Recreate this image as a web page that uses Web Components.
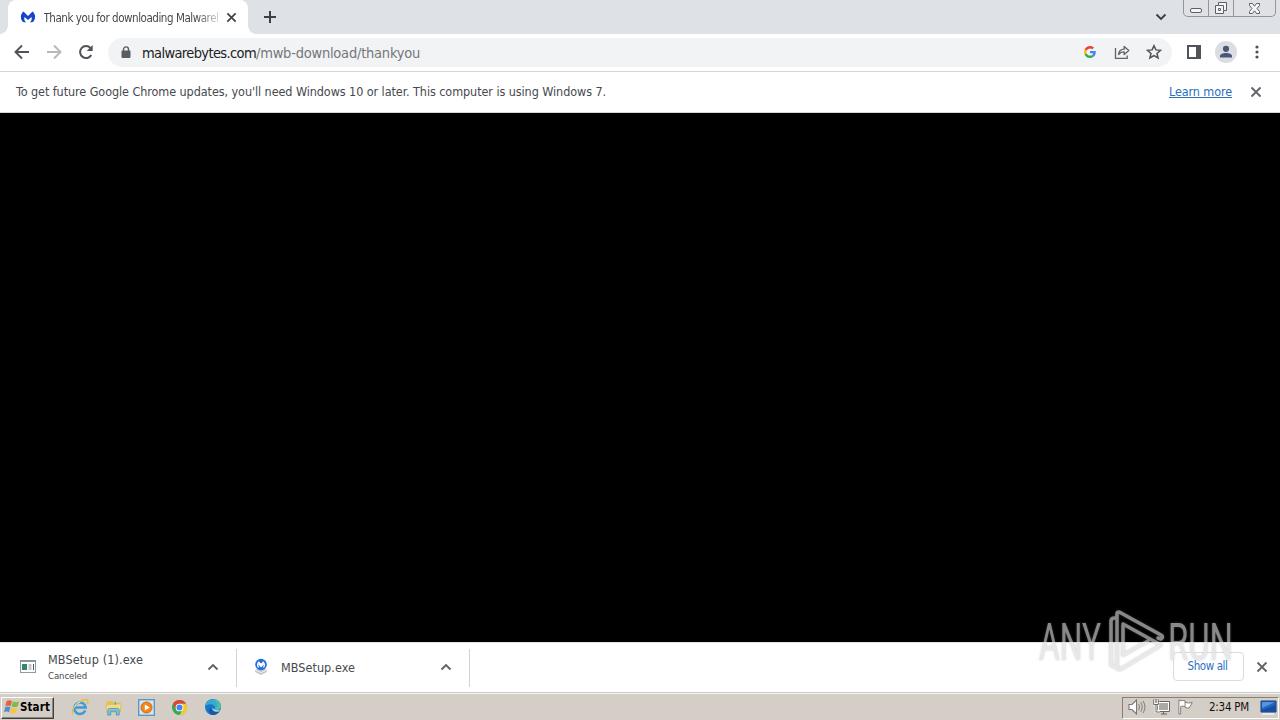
<!DOCTYPE html>
<html lang="en"><head><meta charset="utf-8"><title>Chrome desktop</title>
<style>html,body{margin:0;height:100%;overflow:hidden;font-family:"DejaVu Sans Condensed","DejaVu Sans",sans-serif;font-stretch:condensed}</style></head>
<body><desktop-screen></desktop-screen>
<script>
const define=(name,css,html,after)=>{
  const t=document.createElement('template');
  t.innerHTML=`<style>*{box-sizing:border-box}svg{display:block;flex:none}${css}</style>${html}`;
  customElements.define(name,class extends HTMLElement{
    constructor(){super();this.attachShadow({mode:'open'}).append(t.content.cloneNode(true))}
    connectedCallback(){if(after)after(this)}
  });
};

/* A single line of text whose tracking is adjusted to a given width. */
define('fit-text',':host{display:block;white-space:pre;flex:none}span{display:inline-block}','<span><slot></slot></span>',el=>{
  const s=el.shadowRoot.querySelector('span'),w=+el.getAttribute('w');
  if(w){s.style.letterSpacing=(w-s.getBoundingClientRect().width)/el.textContent.length+'px';el.style.width=w+'px'}
});

const icons={
  m:['0 0 16 16','<path fill="#1745c9" d="M3.500 2.500C.2 5 0 10 3 13L6 13.500C4.200 11.500 4 9.500 4.500 8L8 11L11.500 8C12 9.500 11.800 11.500 10 13.500L13 13C16 10 15.800 5 12.500 2.500L8 7Z"/>'],
  close:['0 0 12 12','<path d="M1.500 1.500l9 9M10.500 1.500l-9 9" stroke="currentColor" stroke-width="1.800"/>'],
  plus:['0 0 14 14','<path d="M7 1v12M1 7h12" stroke="#3c4043" stroke-width="2"/>'],
  back:['0 0 16 16','<path d="M15 8H2M8 1.500L1.500 8L8 14.500" fill="none" stroke="currentColor" stroke-width="1.900"/>'],
  reload:['0 0 16 16','<path d="M13.300 11A6 6 0 1 1 12.500 4" fill="none" stroke="#505357" stroke-width="2"/><path d="M14.700 1v6H8.700Z" fill="#505357"/>'],
  lock:['0 0 10 13','<path d="M2.500 6V3.500a2.500 2.500 0 0 1 5 0V6" fill="none" stroke="#5a5d61" stroke-width="1.400"/><rect x=".5" y="5" width="9" height="8" rx="1" fill="#5a5d61"/>'],
  g:['0 0 48 48','<path fill="#EA4335" d="M24 9.500c3.540 0 6.710 1.220 9.210 3.600l6.850-6.850C35.900 2.380 30.470 0 24 0 14.620 0 6.510 5.380 2.560 13.220l7.980 6.190C12.430 13.720 17.740 9.500 24 9.500z"/><path fill="#4285F4" d="M46.980 24.550c0-1.570-.15-3.090-.38-4.550H24v9.020h12.940c-.58 2.960-2.260 5.480-4.780 7.180l7.730 6c4.510-4.180 7.090-10.360 7.090-17.650z"/><path fill="#FBBC05" d="M10.530 28.590A14.500 14.500 0 0 1 9.770 24c0-1.600.27-3.140.76-4.590l-7.980-6.190A24 24 0 0 0 0 24c0 3.880.92 7.540 2.560 10.780z"/><path fill="#34A853" d="M24 48c6.480 0 11.930-2.130 15.890-5.810l-7.730-6c-2.150 1.450-4.920 2.300-8.160 2.300-6.260 0-11.570-4.220-13.470-9.910l-7.980 6.190C6.510 42.620 14.620 48 24 48z"/>'],
  share:['0 0 16 16','<g fill="none" stroke="#5f6368" stroke-width="1.300"><path d="M1.500 4v10.300h11.700V11.500"/><path d="M4.500 10.500C5 7 7 5.300 10.200 5.200V2.500L14.800 6.500L10.200 10.500V7.800C7.800 7.800 6 8.500 4.500 10.500Z" stroke-linejoin="round"/></g>'],
  star:['0 0 16 16','<path d="M8 1.700l1.900 4.200 4.700.4-3.600 3.100 1.100 4.600L8 11.600 3.900 14 5 9.400 1.400 6.300l4.700-.4Z" fill="none" stroke="#505357" stroke-width="1.500"/>'],
  panel:['0 0 14 14','<path d="M0 0H14V14H0ZM2 2V12H9V2Z" fill="#505357" fill-rule="evenodd"/>'],
  user:['0 0 22 22','<circle cx="11" cy="11" r="11" fill="#dadde2"/><circle cx="11" cy="7.800" r="3.100" fill="#4a5878"/><path d="M5 16.500v-1.500c0-2 3-3 6-3s6 1 6 3v1.500Z" fill="#4a5878"/>'],
  dots:['0 0 4 14','<g fill="#505357"><circle cx="2" cy="2" r="1.600"/><circle cx="2" cy="7" r="1.600"/><circle cx="2" cy="12" r="1.600"/></g>'],
  down:['0 0 12 8','<path d="M1.500 1.500L6 6l4.500-4.500" fill="none" stroke="#3c4043" stroke-width="1.900"/>'],
  up:['0 0 12 8','<path d="M1.500 6.500L6 2l4.500 4.500" fill="none" stroke="#5f6368" stroke-width="1.900"/>'],
  exe:['0 0 16 13','<rect x=".5" y=".5" width="15" height="12" fill="#fff" stroke="#929a9e"/><path d="M0 1h16" stroke="#8b969b" stroke-width="2"/><path d="M2 4h5v6H2Z" fill="#368574"/><path d="M8.500 5h3M8.500 7h3M8.500 9h3" stroke="#8b9297"/><path d="M13.500 4v6" stroke="#455d70"/>'],
  setup:['0 0 16 17','<path d="M2 12l4-2h5l3 2v2l-6 3-6-3Z" fill="#c5c7cb"/><path d="M2 12l6 2.500L14 12" stroke="#eee" fill="none"/><circle cx="8" cy="6.500" r="5.800" fill="#2370dc"/><path d="M5.500 9.500Q3.700 6.700 5.700 4.200L8 6.500l2.300-2.300q2 2.500.2 5.300M5.700 6L8 8.500 10.300 6" fill="none" stroke="#fff" stroke-width="1.300"/>'],
  win:['0 0 18 16','<path d="M3 2Q6 .5 9 2L7.500 7.500Q5 6.400 1.500 7.600Z" fill="#e26336"/><path d="M10 2.500Q13 4 17 2.300L15.300 8Q12 9.300 8.500 8Z" fill="#83b948"/><path d="M1.300 8.700Q4.500 7.500 7.300 8.600L5.700 14Q3 12.800 0 14Z" fill="#4e91d3"/><path d="M8.200 9.200Q11 10.500 15 9.300L13.300 14.600Q10 16 6.700 14.600Z" fill="#f4c447"/>'],
  ie:['0 0 18 18','<path d="M14.300 12.500A5.700 5.700 0 1 1 14.700 9.500H4.500" fill="none" stroke="#3c9bdc" stroke-width="2.500"/><path d="M2 16C-1 13 6 3 15 1.500q3-.2 1.500 4.300" fill="none" stroke="#e4bd42" stroke-width="1.300"/><path d="M4 9Q5 4.500 9 4.200" fill="none" stroke="#b3e7fb"/>'],
  folder:['0 0 18 18','<path d="M1 5l1-3h6l1 2h7l1 10H2Z" fill="#e5c25a"/><path d="M3 6h12v6H3Z" fill="#fff0a8"/><path d="M1 7l3-1 13-1-1 9H2Z" fill="#f2dd87" stroke="#cda947" stroke-width=".5"/><path d="M3 17v-5q0-2 2-2h8q2 0 2 2v5h-3v-4H6v4Z" fill="#7fc5e2" stroke="#438cae" stroke-width=".8"/><path d="M11 3v3" stroke="#64ae71" stroke-width="1.500"/>'],
  media:['0 0 17 17','<rect x=".7" y=".7" width="15.600" height="15.600" fill="#d5e6f3" stroke="#5792ca" stroke-width="1.300"/><circle cx="8.500" cy="8.500" r="5.500" fill="#f18719" stroke="#d76a0a"/><path d="M6.800 5.500v6l5-3Z" fill="#fff"/>'],
  chrome:['0 0 18 18','<circle cx="9" cy="9" r="8" fill="#36a853"/><path d="M2.070 5A8 8 0 0 1 15.930 5H9l-3.460 6Z" fill="#df4537"/><path d="M15.930 5A8 8 0 0 1 9 17l3.460-6L9 5Z" fill="#f8ca32"/><circle cx="9" cy="9" r="4.100" fill="#fff"/><circle cx="9" cy="9" r="3.200" fill="#4285f4"/>'],
  edge:['0 0 18 18','<circle cx="9" cy="9" r="8" fill="#1678c8"/><path d="M1.100 8C2-1 16-.5 17 8.200C17.200 11.700 12.500 12.500 10.500 11.500C12.500 8 8 4 1.100 8Z" fill="#38a9d4"/><path d="M9 1c4 0 8 3 8 7.200 0 3.500-4.500 4.300-6.500 3.300C15 9 14 4 9 1Z" fill="#4fbfa0"/><path d="M7.500 9.500c-.5 4 4 6 8 3.700-2 3-5.500 4.300-8 3.500C4 15 4 11 7.500 9.500Z" fill="#165aa5"/><path d="M10.500 11.600c1.300.9 3.500.8 5 .1l-.2 1.500C12 14.500 8.500 13 8 10Z" fill="#d6d0ca"/>'],
  sound:['0 0 18 16','<path d="M1 5.500h3L8.500 1v14L4 10.500H1Z" fill="#fff" stroke="#777" stroke-width="1.100"/><path d="M10.500 5q1.800 3 0 6M12.700 3.300q3 4.700 0 9.400M15 2q4 6 0 12" fill="none" stroke="#858585" stroke-width="1.100"/>'],
  network:['0 0 17 16','<path d="M5 3h11v9H5Z" fill="#aaa9a4" stroke="#fff" stroke-width="2"/><path d="M4.500 2.500h12v10h-12ZM8 15h6M10.500 12v3" fill="none" stroke="#656565"/><path d="M1 1v4h4V1M3 5v7.500h4" fill="none" stroke="#fff" stroke-width="2.500"/><path d="M.7.500v5h4.600v-5M3 0v4M3 5.500V13h4" fill="none" stroke="#656565"/>'],
  flag:['0 0 18 17','<path d="M2.500 2q3-1 5.500 0v1.500q4 1.500 8 .2-1 2.300-3.500 5.800-2.500.5-4.500-.7V8q-3-1-5 0v8H1V1h1.500Z" fill="#fff" stroke="#777"/><path d="M8 3v5" stroke="#777"/>'],
  screen:['0 0 17 15','<path d="M1 1h15v11H1Z" fill="#2165bd" stroke="#143d82"/><path d="M2 2h13L2 8Z" fill="#5595df"/><path d="M2 10q7-2 13-5v6H2Z" fill="#184e9e"/><path d="M2 14h12" stroke="#eef4fb" stroke-width="1.500"/>'],
  min:['0 0 12 5','<rect x=".5" y=".5" width="11" height="4" rx="1.500" fill="#f4f5f7" stroke="#596068"/>'],
  restore:['0 0 14 14','<path d="M4.500 1.500h8v8h-3v3h-8v-8h3Z" fill="#f4f5f7" stroke="#596068"/><path d="M4.500 4.500h5v5M4.500 7.500h2v2h-2Z" fill="none" stroke="#596068"/>'],
  wx:['0 0 13 11','<path d="M1.500.500h3l2 2.700L8.500.5h3v2L9 5.500l2.500 3v2h-3L6.500 7.800l-2 2.700h-3v-2L4 5.500l-2.500-3Z" fill="#f4f5f7" stroke="#596068"/>']
};
define('ui-icon',':host{display:block;flex:none}svg{width:100%;height:100%}','<svg preserveAspectRatio="none"></svg>',el=>{
  const [box,body]=icons[el.getAttribute('name')],s=el.shadowRoot.querySelector('svg');
  s.setAttribute('viewBox',box);s.innerHTML=body;
  const d=(el.getAttribute('size')||box.slice(4)).split(' ');
  el.style.width=d[0]+'px';el.style.height=(d[1]||d[0])+'px';
});

define('window-controls',`:host{display:flex;width:93px;height:17px;border:1px solid #91959c;border-top:0;border-radius:0 0 5px 5px;background:#dfe1e5}
div{display:flex;justify-content:center;width:25px;border-right:1px solid #91959c}div:last-child{flex:1;border:0}.a{padding-top:8px}.b{padding-top:1px}.c{padding-top:3px}`,
'<div class="a"><ui-icon name="min"></ui-icon></div><div class="b"><ui-icon name="restore"></ui-icon></div><div class="c"><ui-icon name="wx"></ui-icon></div>');

define('tab-strip',`:host{display:flex;height:34px;background:#dee1e6;position:relative}
.tab{margin-left:8px;width:240px;height:34px;background:#fff;border-radius:8px 8px 0 0;display:flex;align-items:center;padding-left:12px;position:relative;color:#45484c}
.tab:before,.tab:after{content:"";position:absolute;bottom:0;width:8px;height:8px}
.tab:before{left:-8px;background:radial-gradient(circle at 0 0,#dee1e6 7.500px,#fff 8px)}.tab:after{right:-8px;background:radial-gradient(circle at 100% 0,#dee1e6 7.500px,#fff 8px)}
.title{width:175px;overflow:hidden;margin-left:7.500px;padding-top:1px;font-size:11.500px;line-height:20px;-webkit-mask:linear-gradient(90deg,#000 87%,#0003)}
.x{margin-left:7px;color:#3c4043}.plus{margin:10px 0 0 15px}.down{margin:13px 16px 0 auto}window-controls{margin-right:4px}`,
`<div class="tab"><ui-icon name="m"></ui-icon><div class="title"><fit-text w="175">Thank you for downloading Malwarel</fit-text></div><ui-icon class="x" name="close" size="11"></ui-icon></div>
<ui-icon class="plus" name="plus"></ui-icon><ui-icon class="down" name="down"></ui-icon><window-controls></window-controls>`);

define('tool-bar',`:host{display:flex;align-items:center;height:38px;padding:0 20px 1px 14px;background:#fff;border-bottom:1px solid #d5d6d8;color:#505357}
.f{transform:scaleX(-1);color:#b7b8ba;margin:0 16px}.omni{display:flex;align-items:center;height:29px;width:1064px;margin-left:14px;border-radius:15px;background:#f1f3f4;padding:0 10px 0 13px}
.url{display:flex;margin-left:11px;font-size:14.500px;line-height:24px;color:#202124;padding-top:1px}.rest{color:#74777b}.g{margin-left:auto}.s{margin:0 16px 0 18px}
.p{margin-left:15px}.u{margin:0 18px 0 14px}`,
`<ui-icon name="back"></ui-icon><ui-icon class="f" name="back"></ui-icon><ui-icon name="reload"></ui-icon>
<div class="omni"><ui-icon name="lock" size="10 12"></ui-icon><div class="url"><fit-text w="114">malwarebytes.com</fit-text><fit-text class="rest" w="164">/mwb-download/thankyou</fit-text></div>
<ui-icon class="g" name="g" size="12"></ui-icon><ui-icon class="s" name="share"></ui-icon><ui-icon name="star"></ui-icon></div>
<ui-icon class="p" name="panel"></ui-icon><ui-icon class="u" name="user"></ui-icon><ui-icon name="dots"></ui-icon>`);

define('info-bar',`:host{display:flex;align-items:center;height:41px;background:#fff;border-bottom:1px solid #d5d6d8;padding:0 18px 1px 16px;font-size:12.500px;line-height:20px;color:#46494d}
.link{margin:0 0 0 auto;color:#2a70b8;line-height:14px;height:13px;border-bottom:1px solid}ui-icon{margin-left:18px;color:#5f6368}`,
`<fit-text w="590">To get future Google Chrome updates, you'll need Windows 10 or later. This computer is using Windows 7.</fit-text><fit-text class="link" w="63">Learn more</fit-text><ui-icon name="close"></ui-icon>`);

define('download-item',`:host{display:flex;align-items:center;height:38px;border-right:1px solid #d2d3d5;padding-right:17px;color:#46494d;font-size:12.500px;line-height:17px}
.text{margin:0 0 0 12px;flex:1}::slotted([slot=status]){font-size:9.500px;line-height:16px}::slotted([slot=icon]),ui-icon{position:relative;top:-1px}`,
'<slot name="icon"></slot><div class="text"><slot></slot><slot name="status"></slot></div><ui-icon name="up"></ui-icon>');

define('download-shelf',`:host{display:flex;align-items:center;height:50px;background:#fff;padding:0 12px 0 0;border-top:1px solid #e1e2e3}
.one{width:237px;padding-left:20px}.two{width:233px;padding-left:16px}
button{margin:-2px 12px 0 auto;width:71px;height:29px;background:transparent;border:1px solid #dadce0;border-radius:4px;color:#2a70c4;font:11.500px "DejaVu Sans Condensed","DejaVu Sans",sans-serif;font-stretch:condensed;padding:0 2px 1px 0;display:flex;align-items:center;justify-content:center}.x{color:#5f6368;margin-top:-2px}`,
`<download-item class="one"><ui-icon slot="icon" name="exe"></ui-icon><fit-text w="95">MBSetup (1).exe</fit-text><fit-text slot="status" w="39">Canceled</fit-text></download-item>
<download-item class="two"><ui-icon slot="icon" name="setup"></ui-icon><fit-text w="74">MBSetup.exe</fit-text></download-item>
<button><fit-text w="40">Show all</fit-text></button><ui-icon class="x" name="close"></ui-icon>`);

define('task-bar',`:host{display:flex;align-items:center;height:28px;background:#d5cec6;border-top:1px solid #c9cac7;box-shadow:inset 0 1px #f7f5f2;padding:2px 1px 0 1px}
.start{display:flex;align-items:center;width:53px;height:22px;padding:0 0 2px 2px;border:1px solid;border-color:#fff #404040 #404040 #fff;box-shadow:inset -1px -1px #8b8680;font-weight:700;font-size:11.500px;color:#000}
.apps{display:flex;align-items:center;gap:16px;margin:-1px 0 0 17px}.tray{display:flex;align-items:center;height:22px;width:157px;margin-left:auto;border:1px solid;border-color:#858079 #fff #fff #858079;padding:0 2px 1px 5px;font-size:11.500px;color:#111}
.n{margin:0 8px 0 7px}.clock{margin:0 11px 0 15px}`,
`<div class="start"><ui-icon name="win" size="16 15"></ui-icon><fit-text w="30">Start</fit-text></div>
<div class="apps"><ui-icon name="ie"></ui-icon><ui-icon name="folder" size="17"></ui-icon><ui-icon name="media"></ui-icon><ui-icon name="chrome" size="17"></ui-icon><ui-icon name="edge"></ui-icon></div>
<div class="tray"><ui-icon name="sound"></ui-icon><ui-icon class="n" name="network"></ui-icon><ui-icon name="flag" size="16 16"></ui-icon><fit-text class="clock" w="40">2:34 PM</fit-text><ui-icon name="screen"></ui-icon></div>`);

/* The gradient fades the mark where it passes from the page onto the shelf. */
define('water-mark',`:host{display:block;position:absolute;left:1035px;top:606px;width:202px;height:72px;pointer-events:none;filter:drop-shadow(0 0 1px #8886)}text{font-family:Roboto,sans-serif;font-stretch:normal;font-weight:400;font-size:52px;fill:url(#w)}`,
`<svg width="202" height="72"><defs><linearGradient id="w" gradientUnits="userSpaceOnUse" x1="0" y1="0" x2="0" y2="72"><stop offset=".5" stop-color="#888"/><stop offset=".5" stop-color="#e8e8e8"/></linearGradient></defs>
<text x="4" y="54" textLength="62" lengthAdjust="spacingAndGlyphs">ANY</text><text x="133" y="54" textLength="65" lengthAdjust="spacingAndGlyphs">RUN</text>
<g fill="none" stroke="url(#w)" stroke-width="3.500" stroke-linejoin="round" stroke-linecap="round"><path d="M76 59V15q0-3 4-3M82 61V7q1-2 4 0l40 22q3 2 0 4l-3-1M88 18l38 21M88 18V49L113 35M126 39L86 63q-4 1-4-2M76 59l4 2"/></g></svg>`);

define('desktop-screen',':host{display:flex;flex-direction:column;width:1280px;height:720px;position:relative;background:#000}main{flex:1;background:#000}',
'<tab-strip></tab-strip><tool-bar></tool-bar><info-bar></info-bar><main></main><download-shelf></download-shelf><task-bar></task-bar><water-mark></water-mark>');
</script></body></html>
